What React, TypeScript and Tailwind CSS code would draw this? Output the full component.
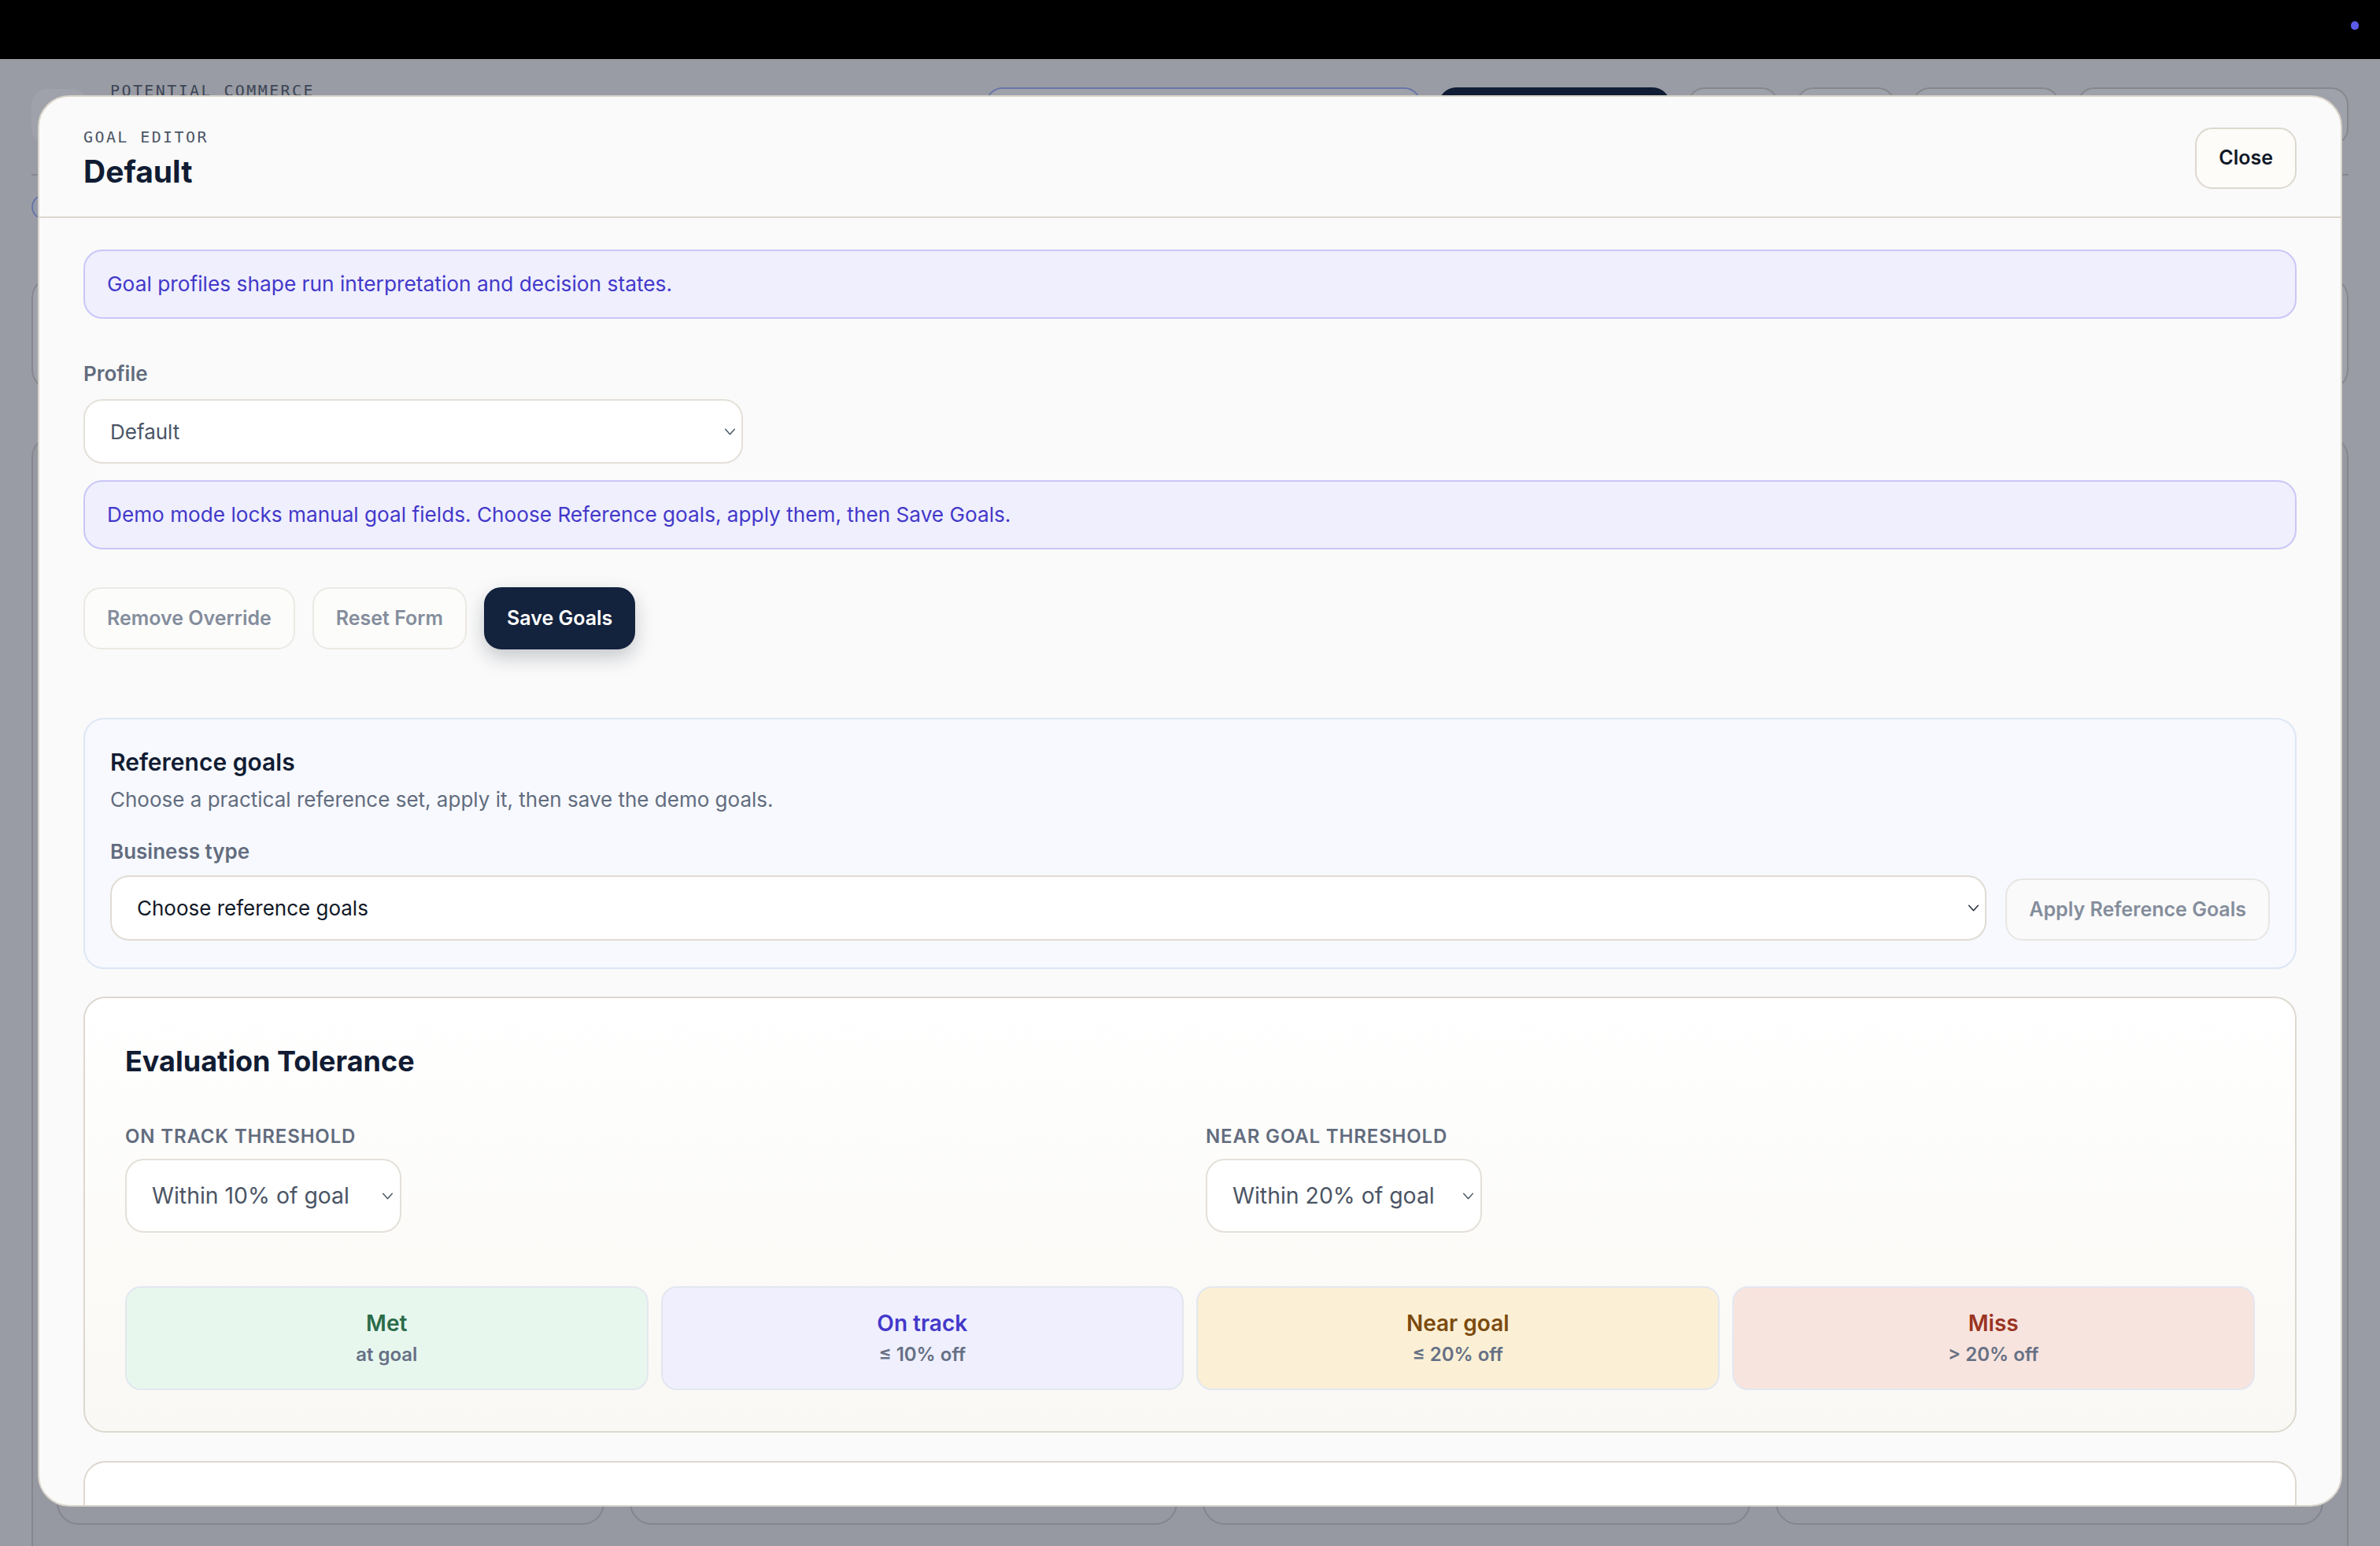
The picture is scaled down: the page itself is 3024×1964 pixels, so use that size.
import React from 'react';

const Chevron = ({ className }: { className?: string }) => (
  <svg
    viewBox="0 0 16 10"
    className={className}
    fill="none"
    stroke="currentColor"
    strokeWidth={1.6}
    strokeLinecap="round"
    strokeLinejoin="round"
  >
    <path d="M1.5 1.5 8 8.5l6.5-7" />
  </svg>
);

const statuses = [
  { title: 'Met', sub: 'at goal', box: 'bg-[#e7f7ee]', text: 'text-[#2a6b48]' },
  { title: 'On track', sub: '≤ 10% off', box: 'bg-[#efeffd]', text: 'text-[#4338ca]' },
  { title: 'Near goal', sub: '≤ 20% off', box: 'bg-[#fbf0d5]', text: 'text-[#7c4a0e]' },
  { title: 'Miss', sub: '> 20% off', box: 'bg-[#f8e4de]', text: 'text-[#9a3323]' },
];

const BackgroundPage = () => (
  <div className="px-10">
    <div className="mt-[27px] flex items-start justify-between">
      <div className="flex items-start gap-7">
        <div className="mt-[11px] h-[70px] w-[72px] rounded-[20px] bg-white" />
        <div className="font-['DejaVu_Sans_Mono',monospace] text-[20px] leading-[26px] tracking-[0.12em] text-[#5b6474]">
          POTENTIAL COMMERCE
        </div>
      </div>
      <div className="mt-[9px] flex gap-[22px]">
        <div className="h-[74px] w-[554px] rounded-[22px] border-2 border-[#a5b4fc] bg-white" />
        <div className="h-[74px] w-[294px] rounded-[22px] bg-[#13223d]" />
        <div className="h-[74px] w-[116px] rounded-[22px] border-2 border-[#d6d3d1] bg-white" />
        <div className="h-[74px] w-[126px] rounded-[22px] border-2 border-[#d6d3d1] bg-white" />
        <div className="h-[74px] w-[187px] rounded-[22px] border-2 border-[#d6d3d1] bg-white" />
        <div className="h-[74px] w-[345px] rounded-[22px] border-2 border-[#d6d3d1] bg-white" />
      </div>
    </div>
    <div className="mt-[36px] border-t-2 border-[#d6d3d1]" />
    <div className="mt-[24px] flex gap-4">
      <div className="h-[32px] w-[220px] rounded-full border-2 border-[#a5b4fc] bg-[#eef2ff]" />
      <div className="h-[32px] w-[180px] rounded-full border-2 border-[#d6d3d1] bg-white" />
    </div>
    <div className="mt-[72px] grid grid-cols-3 gap-6">
      <div className="h-[146px] rounded-[28px] border-2 border-[#d6d3d1] bg-white" />
      <div className="h-[146px] rounded-[28px] border-2 border-[#d6d3d1] bg-white" />
      <div className="h-[146px] rounded-[28px] border-2 border-[#d6d3d1] bg-white" />
    </div>
    <div className="mt-14 flex h-[1500px] flex-col justify-end rounded-[28px] border-2 border-[#d6d3d1] bg-[#f1f1f0] px-[30px] pb-[114px]">
      <div className="grid grid-cols-4 gap-8">
        <div className="h-[180px] rounded-[28px] border-2 border-[#cfcfd0] bg-[#f0f0f1]" />
        <div className="h-[180px] rounded-[28px] border-2 border-[#cfcfd0] bg-[#f0f0f1]" />
        <div className="h-[180px] rounded-[28px] border-2 border-[#cfcfd0] bg-[#f0f0f1]" />
        <div className="h-[180px] rounded-[28px] border-2 border-[#cfcfd0] bg-[#f0f0f1]" />
      </div>
    </div>
  </div>
);

const Modal = () => (
  <div className="flex h-full flex-col overflow-hidden rounded-[40px] border-2 border-[#d9d4cb] bg-[#fafafa]">
    <header className="flex h-[154px] shrink-0 items-center justify-between border-b-2 border-[#dcd7cf] px-14 pt-[3px]">
      <div>
        <div className="font-['DejaVu_Sans_Mono',monospace] text-[20px] leading-[28px] tracking-[0.12em] text-[#4b5565]">
          GOAL EDITOR
        </div>
        <h2 className="mt-1.5 text-[39px] font-bold leading-[48px] text-[#111c33]">Default</h2>
      </div>
      <button className="h-[78px] rounded-[22px] border-2 border-[#ddd8cf] bg-[#fdfcf9] px-7 text-[25px] font-semibold text-[#111827]">
        Close
      </button>
    </header>

    <div className="flex-1 overflow-hidden px-14 pt-10">
      <div className="rounded-[24px] border-2 border-[#c9c7f7] bg-[#efeffd] px-[28px] py-[23px] text-[26.3px] leading-[38px] text-[#4338ca]">
        Goal profiles shape run interpretation and decision states.
      </div>

      <div className="mt-[54px] text-[26px] font-semibold leading-[32px] text-[#626c7e]">Profile</div>
      <div className="mt-4 flex h-[82px] w-[838px] items-center justify-between rounded-[24px] border-2 border-[#e4e0d9] bg-white pl-8 pr-[7px]">
        <span className="text-[26px] text-[#4b5565]">Default</span>
        <Chevron className="h-[9px] w-[15px] text-[#4b5565]" />
      </div>

      <div className="mt-[21px] rounded-[24px] border-2 border-[#c9c7f7] bg-[#efeffd] px-[28px] py-[23px] text-[26.2px] leading-[38px] text-[#4338ca]">
        Demo mode locks manual goal fields. Choose Reference goals, apply them, then Save Goals.
      </div>

      <div className="mt-12 flex gap-[22px]">
        <button className="h-[79px] rounded-[22px] border-2 border-[#ece9e4] bg-[#fcfcfb] px-7 text-[25px] font-semibold text-[#848d9c]">
          Remove Override
        </button>
        <button className="h-[79px] rounded-[22px] border-2 border-[#ece9e4] bg-[#fcfcfb] px-7 text-[25px] font-semibold text-[#848d9c]">
          Reset Form
        </button>
        <button className="h-[79px] rounded-[22px] border-2 border-[#13223d] bg-[#13223d] px-[27px] text-[25px] font-semibold text-white shadow-[0_10px_24px_rgba(15,23,42,0.22)]">
          Save Goals
        </button>
      </div>

      <section className="mt-[87px] rounded-[26px] border-2 border-[#dde6f5] bg-[#f7f9fe] px-8 pt-8 pb-[34px]">
        <h3 className="text-[30px] font-semibold leading-[44px] text-[#111c33]">Reference goals</h3>
        <p className="mt-2 text-[26px] leading-[36px] text-[#626c7e]">
          Choose a practical reference set, apply it, then save the demo goals.
        </p>
        <div className="mt-8 text-[26px] font-semibold leading-[32px] text-[#626c7e]">Business type</div>
        <div className="mt-3.5 flex items-end gap-6">
          <div className="flex h-[83px] flex-1 items-center justify-between rounded-[24px] border-2 border-[#e0dcd4] bg-white pl-8 pr-[7px]">
            <span className="text-[26px] text-[#111827]">Choose reference goals</span>
            <Chevron className="h-[9px] w-[15px] text-[#1f2937]" />
          </div>
          <button className="h-[79px] rounded-[22px] border-2 border-[#e8e6e3] bg-[#fafafa] px-7 text-[25px] font-semibold text-[#848d9c]">
            Apply Reference Goals
          </button>
        </div>
      </section>

      <section className="mt-[35px] rounded-[28px] border-2 border-[#ddd8cf] bg-gradient-to-b from-white to-[#f9f8f4] px-[51px] pt-[56px] pb-[52px]">
        <h3 className="text-[36px] font-bold leading-[48px] text-[#111c33]">Evaluation Tolerance</h3>
        <div className="mt-14 grid grid-cols-2 gap-10">
          {[
            ['On track threshold', 'Within 10% of goal'],
            ['Near goal threshold', 'Within 20% of goal'],
          ].map(([label, value]) => (
            <div key={label}>
              <div className="text-[24px] font-semibold uppercase leading-[32px] tracking-[0.035em] text-[#626c7e]">
                {label}
              </div>
              <div className="mt-3 flex h-[94px] w-[351px] items-center justify-between rounded-[24px] border-2 border-[#e4e0d9] bg-white pl-8 pr-[8px]">
                <span className="text-[28.4px] text-[#4b5565]">{value}</span>
                <Chevron className="h-[9px] w-[15px] text-[#4b5565]" />
              </div>
            </div>
          ))}
        </div>
        <div className="mt-[68px] grid grid-cols-4 gap-4">
          {statuses.map((s) => (
            <div
              key={s.title}
              className={`flex h-[132px] flex-col items-center justify-center rounded-[20px] border-2 border-[#e3e7ef] ${s.box}`}
            >
              <div className={`text-[28px] font-semibold leading-[36px] ${s.text}`}>{s.title}</div>
              <div className="mt-1.5 text-[24px] font-semibold leading-[32px] text-[#667085]">{s.sub}</div>
            </div>
          ))}
        </div>
      </section>

      <section className="mt-[36px] h-[300px] rounded-[28px] border-2 border-[#ddd8cf] bg-white" />
    </div>
  </div>
);

export default function App() {
  return (
    <div className="relative h-[1964px] w-full overflow-hidden bg-[#f6f6f5] font-['Inter','Noto_Sans',sans-serif]">
      <div className="flex h-[75px] items-start justify-end bg-black pt-[27px] pr-[27px]">
        <span className="h-[11px] w-[10px] rounded-full bg-[#5b5be8]" />
      </div>
      <BackgroundPage />
      <div className="absolute inset-x-0 top-[75px] bottom-0 bg-[#0f172a]/40 px-12 pt-[46px] pb-[50px]">
        <Modal />
      </div>
    </div>
  );
}
